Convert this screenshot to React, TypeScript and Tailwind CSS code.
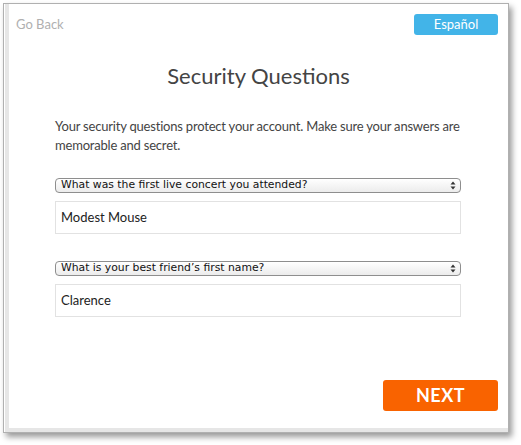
import React from "react";

function FakeSelect({ label }: { label: string }) {
  return (
    <div className="h-[15px] w-[406px] rounded-[4px] border border-[#8e8e8e] bg-gradient-to-b from-[#ffffff] to-[#ececec] flex items-center justify-between pl-[5px] pr-[4px] shadow-[inset_0_1px_0_rgba(255,255,255,0.8)]">
      <span className="text-[10.8px] leading-none text-[#111]" style={{ fontFamily: '"DejaVu Sans", Verdana, sans-serif' }}>
        {label}
      </span>
      <svg width="6" height="9" viewBox="0 0 6 9">
        <path d="M3 0.5 L5.5 3.5 L0.5 3.5 Z" fill="#333" />
        <path d="M3 8.5 L5.5 5.5 L0.5 5.5 Z" fill="#333" />
      </svg>
    </div>
  );
}

function Field({ value }: { value: string }) {
  return (
    <div className="h-[33px] w-[406px] border border-[#e2e2e2] bg-white flex items-center pl-[5px]">
      <span className="text-[13px] text-[#222]">{value}</span>
    </div>
  );
}

export default function App() {
  return (
    <div
      className="w-[521px] h-[445px] bg-white pt-[3px] pl-[3px]"
      style={{ fontFamily: 'Lato, "Open Sans", sans-serif' }}
    >
      <div className="w-[506px] h-[430px] border border-[#b0b0b0] bg-white shadow-[3px_4px_6px_rgba(0,0,0,0.4)] pl-[1px]">
        <div className="h-full border-l-[4px] border-b-[4px] border-[#e6e6e6] bg-white pt-[10px] pr-[10px] flex flex-col">
          <div className="flex items-center justify-between pl-[7px]">
            <span className="text-[13px] text-[#b0b0b0]">Go Back</span>
            <div className="w-[84px] h-[21px] rounded-[3px] bg-[#42b4e8] flex items-center justify-center">
              <span className="text-[13px] text-white">Español</span>
            </div>
          </div>
          <h1 className="mt-[26px] text-center text-[22px] leading-[30px] text-[#444] pl-[10px]">
            Security Questions
          </h1>
          <p className="mt-[26px] pl-[46px] pr-[20px] text-[13px] leading-[19px] tracking-[-0.2px] text-[#444]">
            Your security questions protect your account. Make sure your answers are memorable and secret.
          </p>
          <div className="pl-[46px] mt-[23px] flex flex-col">
            <FakeSelect label="What was the first live concert you attended?" />
            <div className="mt-[8px]">
              <Field value="Modest Mouse" />
            </div>
            <div className="mt-[27px]">
              <FakeSelect label="What is your best friend’s first name?" />
            </div>
            <div className="mt-[8px]">
              <Field value="Clarence" />
            </div>
          </div>
          <div className="mt-auto mb-[17px] flex justify-end">
            <div className="w-[115px] h-[31px] rounded-[3px] bg-[#f96300] flex items-center justify-center">
              <span className="text-[18px] font-bold text-white tracking-[0.5px]">NEXT</span>
            </div>
          </div>
        </div>
      </div>
    </div>
  );
}
